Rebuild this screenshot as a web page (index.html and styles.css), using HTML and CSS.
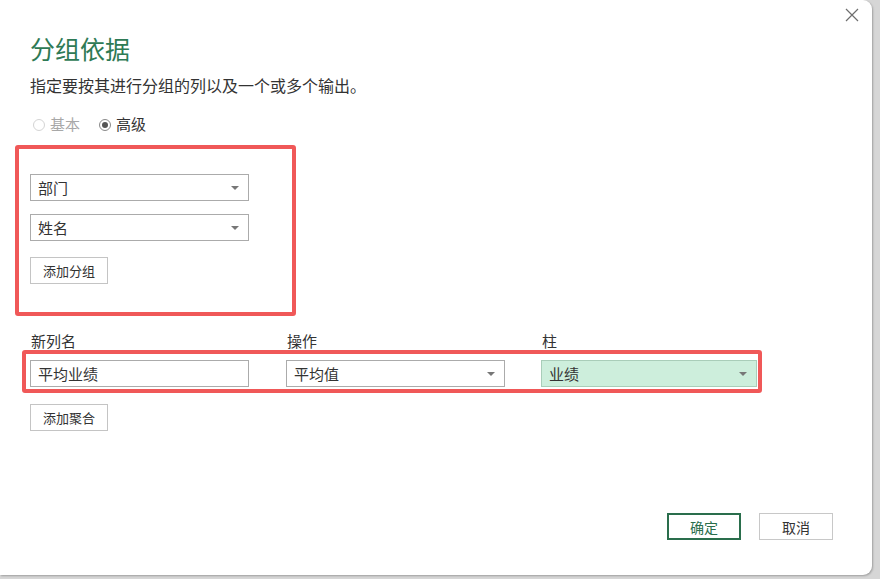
FILE: index.html
```html
<!DOCTYPE HTML>
<html>
<head>
	<title>分组依据</title>
	<meta name="viewport" content="width=device-width">
	<link rel="stylesheet" href="styles.css">
</head>
<body>
	<div class="dialog">
		<div class="topbar">
			<button class="close" title="关闭">
				<svg width="14" height="14" viewBox="0 0 14 14"><path d="M1 1 L13 13 M13 1 L1 13" stroke="#6e6e6e" stroke-width="1.2" fill="none"/></svg>
			</button>
		</div>
		<h1 class="title">分组依据</h1>
		<p class="desc">指定要按其进行分组的列以及一个或多个输出。</p>
		<div class="modes">
			<label class="radio disabled"><span class="dot"></span>基本</label>
			<label class="radio checked"><span class="dot"></span>高级</label>
		</div>

		<!-- group by columns -->
		<div class="groups mark">
			<div class="select"><span>部门</span><i class="caret"></i></div>
			<div class="select"><span>姓名</span><i class="caret"></i></div>
			<button class="button">添加分组</button>
		</div>

		<!-- aggregations -->
		<div class="aggs">
			<div class="agghead">
				<span>新列名</span>
				<span>操作</span>
				<span>柱</span>
			</div>
			<div class="aggrow">
				<div class="textbox">平均业绩</div>
				<div class="select"><span>平均值</span><i class="caret"></i></div>
				<div class="select active"><span>业绩</span><i class="caret"></i></div>
			</div>
		</div>
		<button class="button addagg">添加聚合</button>

		<div class="footer">
			<button class="button bok">确定</button>
			<button class="button bcancel">取消</button>
		</div>
	</div>
</body>
</html>
```

FILE: styles.css
```css
/* font choice */
* {
	font-family: "Liberation Sans", "Noto Sans CJK SC", sans-serif;
	box-sizing: border-box;
}
body {
	margin: 0;
	background-color: #d6d6d6;
	height: 579px;
	overflow: hidden;
}
/* dialog frame */
.dialog {
	position: relative;
	width: 872px;
	height: 575px;
	background-color: white;
	border-radius: 0 9px 9px 0;
	box-shadow: 1px 1px 2px rgba(0, 0, 0, 0.25);
	padding: 0 39px 35px 30px;
	display: flex;
	flex-direction: column;
	color: #333333;
}
.topbar {
	display: flex;
	justify-content: flex-end;
	padding-top: 8px;
	margin-right: -26px;
}
.close {
	border: none;
	background: none;
	padding: 0;
	width: 14px;
	height: 14px;
	display: block;
}
.close svg {
	display: block;
}
.title {
	margin: 12px 0 0 0;
	font-size: 25px;
	line-height: 32px;
	font-weight: normal;
	color: #2e7a55;
}
.desc {
	margin: 11px 0 0 0;
	font-size: 16px;
	line-height: 20px;
}
/* radio buttons */
.modes {
	margin-top: 18px;
	display: flex;
	gap: 19px;
	font-size: 15px;
	line-height: 20px;
	padding-left: 3px;
}
.radio {
	display: flex;
	align-items: center;
	gap: 5px;
}
.radio .dot {
	width: 12px;
	height: 12px;
	border-radius: 50%;
	border: 1px solid #8a8a8a;
	position: relative;
}
.radio.disabled {
	color: #a8a8a8;
}
.radio.disabled .dot {
	border-color: #d4d4d4;
}
.radio.checked .dot::after {
	content: "";
	position: absolute;
	left: 2px;
	top: 2px;
	width: 6px;
	height: 6px;
	border-radius: 50%;
	background-color: #555555;
}
/* red annotation frames */
.mark {
	border: 4px solid #f05858;
	border-radius: 3px;
}
.groups {
	margin: 10px 0 0 -15px;
	width: 281px;
	padding: 25px 0 28px 11px;
	display: flex;
	flex-direction: column;
	align-items: flex-start;
}
.groups .select + .select {
	margin-top: 13px;
}
.groups .button {
	margin-top: 16px;
}
/* fields */
.select, .textbox {
	width: 219px;
	height: 27px;
	border: 1px solid #ababab;
	background-color: white;
	font-size: 15px;
	line-height: 25px;
	padding: 1px 9px 0 7px;
	display: flex;
	align-items: center;
	justify-content: space-between;
}
.caret {
	width: 0;
	height: 0;
	border-left: 4px solid transparent;
	border-right: 4px solid transparent;
	border-top: 4px solid #777777;
}
.select.active {
	width: 216px;
	background-color: #cdeedc;
	border-color: #a9cdb9;
}
/* buttons */
.button {
	height: 27px;
	padding: 0 12px;
	background-color: white;
	border: 1px solid #c4c4c4;
	font-size: 13px;
	color: #333333;
	white-space: nowrap;
}
/* aggregation table */
.aggs {
	margin-top: 16px;
}
.agghead, .aggrow {
	display: grid;
	grid-template-columns: 219px 219px 216px;
	column-gap: 37px;
}
.agghead {
	font-size: 15px;
	line-height: 20px;
	padding-left: 1px;
}
.agghead span:nth-child(3) {
	margin-left: -1px;
}
.aggrow {
	margin-top: 8px;
	position: relative;
	width: 727px;
}
.aggrow .select.active {
	margin-left: -1px;
}
.aggrow::before {
	content: "";
	position: absolute;
	left: -8px;
	top: -10px;
	right: -5px;
	bottom: -6px;
	border: 4px solid #f05858;
	border-radius: 3px;
	pointer-events: none;
}
.addagg {
	margin-top: 17px;
	align-self: flex-start;
}
/* footer */
.footer {
	margin-top: auto;
	display: flex;
	justify-content: flex-end;
	gap: 18px;
}
.footer .button {
	width: 74px;
	font-size: 14px;
}
.bok {
	border: 2px solid #2a6e4c;
	color: #2a6e4c;
}
.bcancel {
	border-color: #c8c8c8;
}
```
